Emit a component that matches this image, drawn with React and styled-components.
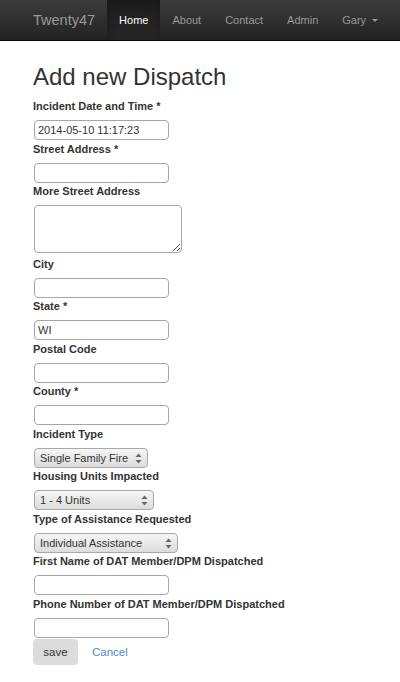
import React from "react";
import styled, { createGlobalStyle } from "styled-components";

const Global = createGlobalStyle`
body {
  margin: 0;
  background: #fff;
  font-family: "Liberation Sans", Arial, sans-serif;
  color: #333;
}
`;

const Navbar = styled.nav`
height: 41px;
display: flex;
align-items: stretch;
padding-left: 21px;
background: linear-gradient(to bottom, #3c3c3c 0%, #222 100%);
border-bottom: 1px solid #080808;
box-sizing: border-box;
`;

const Brand = styled.a`
display: flex;
align-items: center;
padding: 0 12px;
font-size: 14.5px;
color: #999;
text-decoration: none;
`;

const NavItem = styled.a`
display: flex;
align-items: center;
padding: 0 12px;
font-size: 11px;
color: ${p => (p.$active ? "#fff" : "#999")};
text-decoration: none;
background: ${p => (p.$active ? "linear-gradient(to bottom, #1e1e1e 0%, #262626 100%)" : "transparent")};
box-shadow: ${p => (p.$active ? "inset 0 3px 9px rgba(0,0,0,0.25)" : "none")};
`;

const Caret = styled.span`
display: inline-block;
margin-left: 6px;
width: 0;
height: 0;
border-top: 3px solid #999;
border-left: 3px solid transparent;
border-right: 3px solid transparent;
`;

const Page = styled.div`
padding: 21px 33px 0;
`;

const Title = styled.h1`
margin: 0 0 7px;
font-size: 24px;
line-height: 30px;
font-weight: 400;
color: #333;
`;

const Field = styled.div`
display: flex;
flex-direction: column;
align-items: flex-start;
margin-bottom: 1.5px;
`;

const Label = styled.label`
font-size: 11px;
line-height: 14px;
font-weight: 700;
color: #333;
margin-bottom: 7px;
`;

const Input = styled.input`
box-sizing: border-box;
width: 135px;
height: 20px;
margin-left: 1px;
padding: 0 3px;
font-family: "Liberation Sans", Arial, sans-serif;
font-size: 11px;
color: #333;
border: 1px solid #a6a6a6;
border-radius: 4px;
background: #fff;
outline: none;
`;

const TextArea = styled.textarea`
box-sizing: border-box;
width: 148px;
height: 48px;
margin: 0 0 2px 1px;
border: 1px solid #a6a6a6;
border-radius: 4px;
font-family: "Liberation Sans", Arial, sans-serif;
font-size: 11px;
display: block;
`;

const SelectBox = styled.div`
position: relative;
box-sizing: border-box;
width: ${p => p.$w}px;
height: 20px;
margin-left: 1px;
border: 1px solid #a8a8a8;
border-radius: 4px;
background: linear-gradient(to bottom, #f6f6f6 0%, #dcdcdc 100%);
display: flex;
align-items: center;
padding-left: 5px;
font-size: 11px;
color: #333;
`;

const Arrows = styled.svg`
position: absolute;
right: 5px;
top: 4px;
`;

const Actions = styled.div`
display: flex;
align-items: center;
gap: 14px;
margin-top: 0.5px;
`;

const SaveButton = styled.button`
width: 45px;
height: 26px;
border: none;
border-radius: 4px;
background: #dcdcdc;
font-family: "Liberation Sans", Arial, sans-serif;
font-size: 11.5px;
color: #333;
padding: 0;
`;

const CancelLink = styled.a`
font-size: 11.5px;
color: #4a8bd0;
text-decoration: none;
`;

function Select({ width, value }) {
  return (
    <SelectBox $w={width}>
      {value}
      <Arrows width="7" height="11" viewBox="0 0 7 11">
        <path d="M3.5 0.5 L6.5 4 L0.5 4 Z" fill="#666" />
        <path d="M3.5 10.5 L6.5 7 L0.5 7 Z" fill="#666" />
      </Arrows>
    </SelectBox>
  );
}

const fields = [
  { label: "Incident Date and Time *", type: "input", value: "2014-05-10 11:17:23" },
  { label: "Street Address *", type: "input" },
  { label: "More Street Address", type: "textarea" },
  { label: "City", type: "input" },
  { label: "State *", type: "input", value: "WI" },
  { label: "Postal Code", type: "input" },
  { label: "County *", type: "input" },
  { label: "Incident Type", type: "select", value: "Single Family Fire", width: 114 },
  { label: "Housing Units Impacted", type: "select", value: "1 - 4 Units", width: 120 },
  { label: "Type of Assistance Requested", type: "select", value: "Individual Assistance", width: 144 },
  { label: "First Name of DAT Member/DPM Dispatched", type: "input" },
  { label: "Phone Number of DAT Member/DPM Dispatched", type: "input" },
];

export default function App() {
  return (
    <>
      <Global />
      <Navbar>
        <Brand href="#">Twenty47</Brand>
        <NavItem href="#" $active>Home</NavItem>
        <NavItem href="#">About</NavItem>
        <NavItem href="#">Contact</NavItem>
        <NavItem href="#">Admin</NavItem>
        <NavItem href="#">Gary<Caret /></NavItem>
      </Navbar>
      <Page>
        <Title>Add new Dispatch</Title>
        {fields.map(f => (
          <Field key={f.label}>
            <Label>{f.label}</Label>
            {f.type === "input" && <Input defaultValue={f.value || ""} />}
            {f.type === "textarea" && <TextArea />}
            {f.type === "select" && <Select width={f.width} value={f.value} />}
          </Field>
        ))}
        <Actions>
          <SaveButton>save</SaveButton>
          <CancelLink href="#">Cancel</CancelLink>
        </Actions>
      </Page>
    </>
  );
}
